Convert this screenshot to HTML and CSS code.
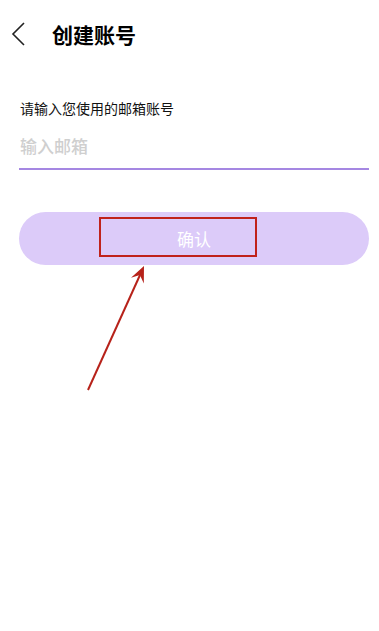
FILE: index.html
```html
<!DOCTYPE html>
<html lang="zh">
<head>
<meta charset="utf-8">
<link rel="stylesheet" href="styles.css">
</head>
<body>
<div class="page">
  <header class="header">
    <svg class="back" width="14" height="24" viewBox="0 0 14 24"><path d="M13 1 L2 12 L13 23" fill="none" stroke="#222" stroke-width="1.6"/></svg>
    <h1 class="title">创建账号</h1>
  </header>
  <main class="form">
    <div class="label">请输入您使用的邮箱账号</div>
    <div class="field"><span class="placeholder">输入邮箱</span></div>
    <div class="btn">确认<div class="mark"></div></div>
  </main>
  <svg class="arrow" width="379" height="631" viewBox="0 0 379 631">
    <line x1="88" y1="390" x2="140" y2="275" stroke="#b7221a" stroke-width="2"/>
    <polygon points="144,266 143.8,283.5 139.9,275.1 131,277.7" fill="#b7221a"/>
  </svg>
</div>
</body>
</html>
```
FILE: styles.css
```css
html, body { margin: 0; padding: 0; background: #fff; }
body { font-family: "Noto Sans CJK SC", "Noto Sans", sans-serif; color: #111; }
.page { position: relative; width: 379px; height: 631px; overflow: hidden; }
.header { height: 68px; display: flex; align-items: center; padding-left: 11px; }
.back { display: block; margin-right: 27px; }
.title { margin: 0; font-size: 21px; font-weight: 700; line-height: 28px; color: #000; }
.form { padding: 30px 10px 0 19px; display: flex; flex-direction: column; }
.label { font-size: 14px; line-height: 20px; color: #111; padding-left: 1px; }
.field { padding: 15px 0 9px; border-bottom: 2px solid #a587e2; }
.placeholder { display: block; font-size: 17px; line-height: 26px; font-weight: 500; color: #cfcfcf; padding-left: 1px; }
.btn { position: relative; margin-top: 42px; height: 53px; border-radius: 27px; background: #dccbf9; color: #fff; font-size: 17px; display: flex; align-items: center; justify-content: center; }
.mark { position: absolute; left: 80px; top: 5px; width: 154px; height: 36px; border: 2px solid #c0221b; }
.arrow { position: absolute; left: 0; top: 0; pointer-events: none; }
```
